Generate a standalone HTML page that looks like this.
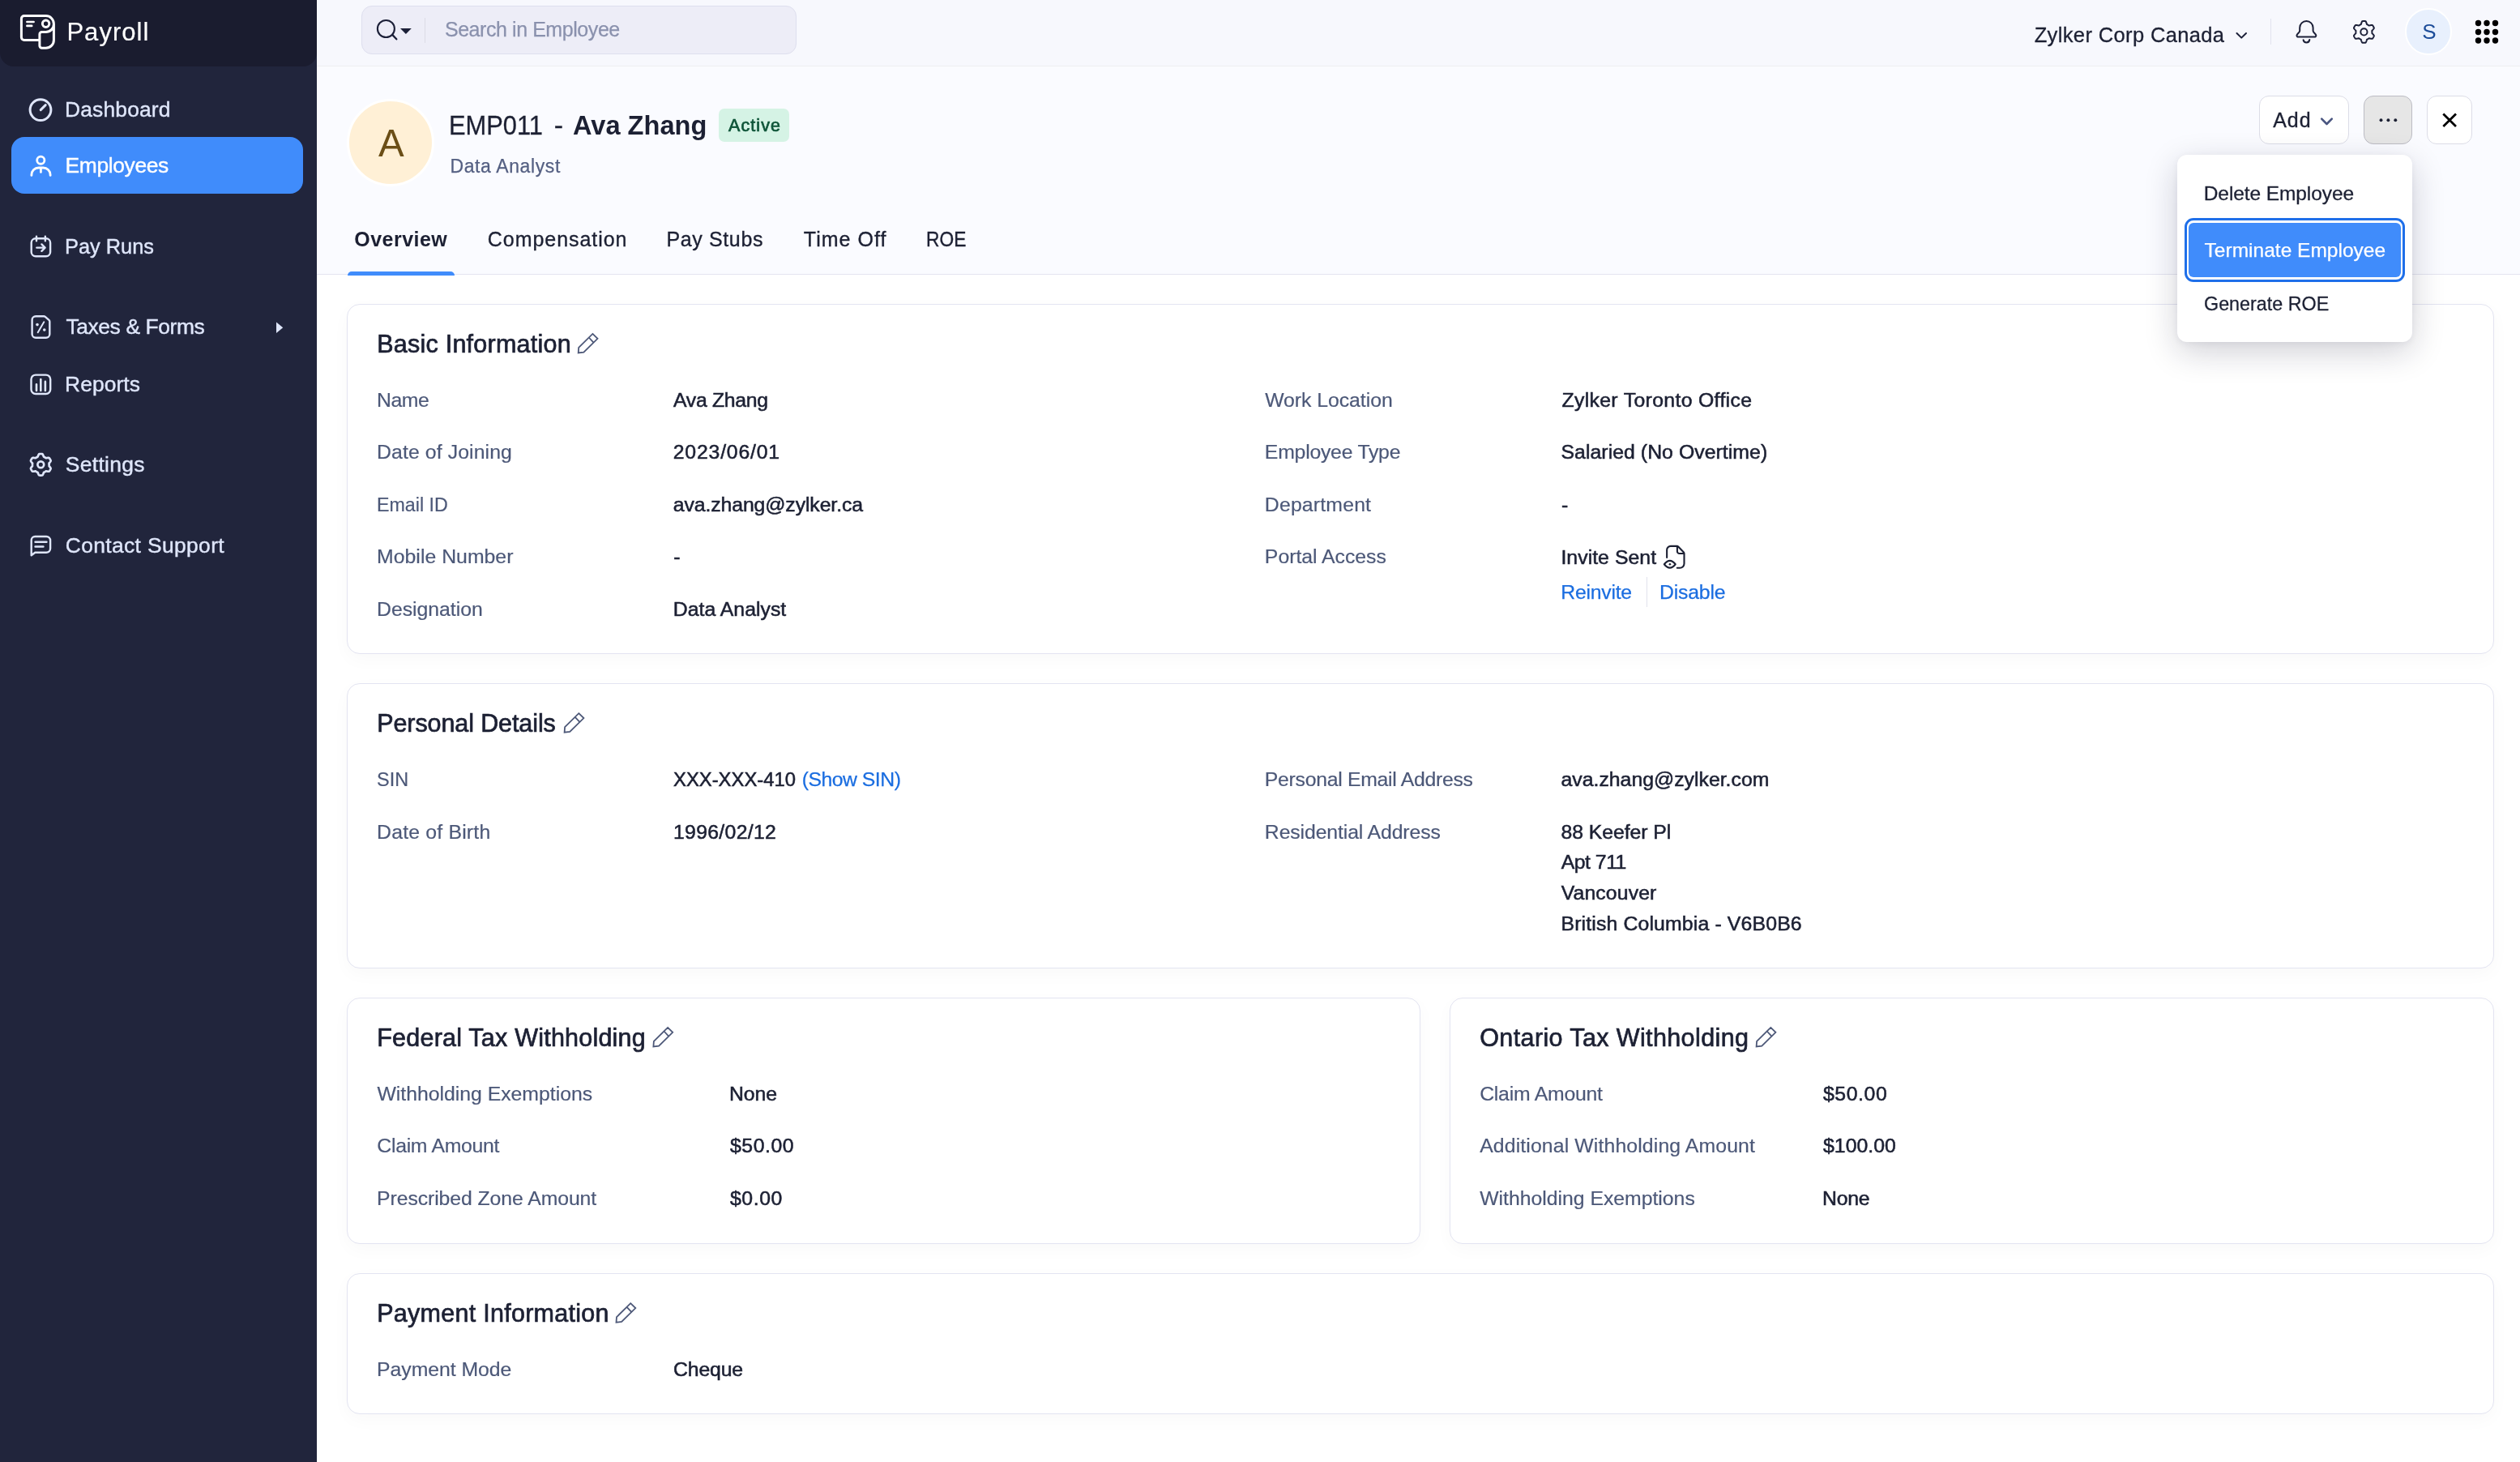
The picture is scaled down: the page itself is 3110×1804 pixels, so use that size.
<!DOCTYPE html>
<html lang="en"><head><meta charset="utf-8"><title>Payroll - Employee</title>
<style>
*{box-sizing:border-box;margin:0;padding:0}
html,body{width:3110px;height:1804px;overflow:hidden;background:#fff}
body{position:relative;font-family:"Liberation Sans",sans-serif;color:#1c2033}
.abs{position:absolute}
.ic{position:absolute;overflow:visible}
.t{position:absolute;white-space:nowrap;line-height:0;font-kerning:normal}
#side{left:0;top:0;width:391px;height:1804px;background:#21253c}
#sidehead{left:0;top:0;width:391px;height:82px;background:#1a1c2f;border-radius:0 0 17px 17px}
#navact{left:14px;top:169px;width:360px;height:70px;border-radius:16px;background:#408cfb}
#topbar{left:391px;top:0;width:2719px;height:82px;background:#f7f8fd;border-bottom:1px solid #eeeef1}
#search{left:446px;top:7px;width:537px;height:60px;border-radius:13px;background:#ededf7;border:1px solid #dedfee}
#sdiv{left:524px;top:22px;width:1.3px;height:31px;background:#dcdce6}
#tdiv{left:2802px;top:23px;width:1.3px;height:32px;background:#e2e3ee}
#uava{left:2968.3px;top:10.2px;width:57.4px;height:57.4px;border-radius:50%;background:#e8f0fd;border:2.7px solid #fff}
#head{left:391px;top:82px;width:2719px;height:257px;background:#fafbff;border-bottom:1.5px solid #e4e5f0}
#ava{left:428px;top:122px;width:108px;height:108px;border-radius:50%;background:#fff0d6;border:3px solid #fff}
#badge{left:887px;top:134px;width:87px;height:41px;border-radius:7px;background:#d5f3e5}
#tabline{left:429px;top:335px;width:132px;height:4.5px;background:#408cfb;border-radius:5px 5px 0 0}
.btn{position:absolute;top:118px;height:60px;border-radius:12px;background:#fff;border:1.5px solid #dcdde7}
#badd{left:2788px;width:111px}
#bdots{left:2917px;width:60px;background:#e6e6e6;border-color:#bcbcc4}
#bx{left:2995px;width:56px}
.card{position:absolute;background:#fff;border:1px solid #e3e4f1;border-radius:16px;box-shadow:0 7px 22px rgba(10,10,40,.028)}
#dd{left:2687px;top:191px;width:289.5px;height:231px;border-radius:12px;background:#fff;box-shadow:0 12px 40px rgba(20,20,50,.2),0 2px 8px rgba(20,20,50,.05)}
#ddring{left:2695.7px;top:269.3px;width:272.6px;height:78.3px;border-radius:11px;border:3px solid #1f6fe9;background:#fff}
#ddfill{left:2701.2px;top:274.8px;width:261.6px;height:67px;border-radius:6px;background:#408cfb}
#txt{position:absolute;left:0;top:0;width:3110px;height:1804px;will-change:transform}
#rdiv{left:2032px;top:712px;width:1.3px;height:37px;background:#e1e2ec}
</style></head>
<body>
<div id="side" class="abs"></div><div id="sidehead" class="abs"></div><div id="navact" class="abs"></div>
<svg class="ic" style="left:20px;top:12px" width="54" height="54" viewBox="20 12 54 54" ><path d="M48.9 49.4 H29.9 A3.5 3.5 0 0 1 26.4 45.9 V23.1 A3.5 3.5 0 0 1 29.9 19.6 H56.6 A9.8 9.8 0 0 1 66.4 29.4 V49.4 A9.8 9.8 0 0 1 56.6 59.2 H51.6 A2.7 2.7 0 0 1 48.9 56.5 V42.2 A2.7 2.7 0 0 1 51.6 39.5 H56.6 A9.8 9.8 0 0 0 66.4 29.7" stroke="#fff" stroke-width="3" fill="none" stroke-linecap="round" stroke-linejoin="round"/><circle cx="56.6" cy="29.3" r="4.2" stroke="#fff" stroke-width="3" fill="none" stroke-linecap="round" stroke-linejoin="round"/><path d="M33.4 27 H41.6 M33.4 31.9 H39.2" stroke="#fff" stroke-width="2.6" stroke-linecap="round" fill="none"/></svg><svg class="ic" style="left:30px;top:115px" width="40" height="40" viewBox="30 115 40 40" ><circle cx="50" cy="135.6" r="12.9" stroke="#dfe6fa" stroke-width="3" fill="none" stroke-linecap="round"/><path d="M50.2 135.6 L56.2 129.6" stroke="#dfe6fa" stroke-width="3" fill="none" stroke-linecap="round"/></svg><svg class="ic" style="left:30px;top:185px" width="40" height="40" viewBox="30 185 40 40" ><circle cx="50.3" cy="197.65" r="4.6" stroke="#fff" stroke-width="2.8" fill="none" stroke-linecap="round"/><path d="M38.9 216.4 V215.8 A8.8 8.8 0 0 1 47.7 207 H53.3 A8.8 8.8 0 0 1 62.1 215.8 V216.4 M50.4 207 V212.4" stroke="#fff" stroke-width="2.8" fill="none" stroke-linecap="round"/></svg><svg class="ic" style="left:30px;top:285px" width="40" height="40" viewBox="30 285 40 40" ><rect x="38.7" y="294.3" width="23.4" height="21.9" rx="5.3" stroke="#dfe6fa" stroke-width="2.4" fill="none" stroke-linecap="round" stroke-linejoin="round"/><path d="M45 291.6 V297.2 M55.85 291.6 V297.2 M45.3 305.6 H55.5 M51.4 301.4 L55.6 305.6 L51.4 309.8" stroke="#dfe6fa" stroke-width="2.4" fill="none" stroke-linecap="round" stroke-linejoin="round"/></svg><svg class="ic" style="left:30px;top:384px" width="40" height="40" viewBox="30 384 40 40" ><path d="M44.1 390.2 H54.0 Q55 390.2 55.8 390.9 L60.4 394.8 Q61.3 395.6 61.3 396.8 V412.2 A4.5 4.5 0 0 1 56.8 416.7 H44.1 A4.5 4.5 0 0 1 39.6 412.2 V394.7 A4.5 4.5 0 0 1 44.1 390.2 Z" stroke="#dfe6fa" stroke-width="2.4" fill="none" stroke-linecap="round" stroke-linejoin="round"/><path d="M46.7 410.2 L54.3 397.3" stroke="#dfe6fa" stroke-width="2" stroke-linecap="round"/><circle cx="46" cy="400.6" r="1.8" fill="#dfe6fa"/><circle cx="54.75" cy="407" r="1.8" fill="#dfe6fa"/></svg><svg class="ic" style="left:30px;top:455px" width="40" height="40" viewBox="30 455 40 40" ><rect x="38.5" y="462.6" width="23.7" height="23.4" rx="5.5" stroke="#dfe6fa" stroke-width="2.4" fill="none" stroke-linecap="round"/><path d="M45 474.2 V482 M50.3 468 V482 M55.85 470.9 V482" stroke="#dfe6fa" stroke-width="2.6" stroke-linecap="round"/></svg><svg class="ic" style="left:30px;top:553px" width="40" height="40" viewBox="30 553 40 40" ><path d="M60.60 573.30 L60.59 572.94 L60.57 572.58 L60.54 572.22 L60.50 571.87 L60.65 571.48 L61.06 571.01 L61.49 570.51 L61.90 569.97 L62.28 569.41 L62.60 568.82 L62.63 568.32 L62.45 567.89 L62.25 567.47 L62.04 567.06 L61.82 566.65 L61.58 566.25 L61.33 565.86 L61.06 565.48 L60.78 565.11 L60.33 564.88 L59.66 564.87 L58.98 564.92 L58.31 565.01 L57.66 565.12 L57.05 565.25 L56.64 565.18 L56.35 564.97 L56.06 564.76 L55.76 564.57 L55.45 564.38 L55.14 564.21 L54.82 564.04 L54.49 563.89 L54.16 563.75 L53.89 563.43 L53.70 562.84 L53.48 562.22 L53.22 561.59 L52.92 560.98 L52.57 560.41 L52.15 560.13 L51.69 560.07 L51.23 560.03 L50.76 560.01 L50.30 560.00 L49.84 560.01 L49.37 560.03 L48.91 560.07 L48.45 560.13 L48.03 560.41 L47.68 560.98 L47.38 561.59 L47.12 562.22 L46.90 562.84 L46.71 563.43 L46.44 563.75 L46.11 563.89 L45.78 564.04 L45.46 564.21 L45.15 564.38 L44.84 564.57 L44.54 564.76 L44.25 564.97 L43.96 565.18 L43.55 565.25 L42.94 565.12 L42.29 565.01 L41.62 564.92 L40.94 564.87 L40.27 564.88 L39.82 565.11 L39.54 565.48 L39.27 565.86 L39.02 566.25 L38.78 566.65 L38.56 567.06 L38.35 567.47 L38.15 567.89 L37.97 568.32 L38.00 568.82 L38.32 569.41 L38.70 569.97 L39.11 570.51 L39.54 571.01 L39.95 571.48 L40.10 571.87 L40.06 572.22 L40.03 572.58 L40.01 572.94 L40.00 573.30 L40.01 573.66 L40.03 574.02 L40.06 574.38 L40.10 574.73 L39.95 575.12 L39.54 575.59 L39.11 576.09 L38.70 576.63 L38.32 577.19 L38.00 577.78 L37.97 578.28 L38.15 578.71 L38.35 579.13 L38.56 579.54 L38.78 579.95 L39.02 580.35 L39.27 580.74 L39.54 581.12 L39.82 581.49 L40.27 581.72 L40.94 581.73 L41.62 581.68 L42.29 581.59 L42.94 581.48 L43.55 581.35 L43.96 581.42 L44.25 581.63 L44.54 581.84 L44.84 582.03 L45.15 582.22 L45.46 582.39 L45.78 582.56 L46.11 582.71 L46.44 582.85 L46.71 583.17 L46.90 583.76 L47.12 584.38 L47.38 585.01 L47.68 585.62 L48.03 586.19 L48.45 586.47 L48.91 586.53 L49.37 586.57 L49.84 586.59 L50.30 586.60 L50.76 586.59 L51.23 586.57 L51.69 586.53 L52.15 586.47 L52.57 586.19 L52.92 585.62 L53.22 585.01 L53.48 584.38 L53.70 583.76 L53.89 583.17 L54.16 582.85 L54.49 582.71 L54.82 582.56 L55.14 582.39 L55.45 582.22 L55.76 582.03 L56.06 581.84 L56.35 581.63 L56.64 581.42 L57.05 581.35 L57.66 581.48 L58.31 581.59 L58.98 581.68 L59.66 581.73 L60.33 581.72 L60.78 581.49 L61.06 581.12 L61.33 580.74 L61.58 580.35 L61.82 579.95 L62.04 579.54 L62.25 579.13 L62.45 578.71 L62.63 578.28 L62.60 577.78 L62.28 577.19 L61.90 576.63 L61.49 576.09 L61.06 575.59 L60.65 575.12 L60.50 574.73 L60.54 574.38 L60.57 574.02 L60.59 573.66Z" stroke="#dfe6fa" stroke-width="2.7" fill="none" stroke-linejoin="round"/><circle cx="50.3" cy="573.3" r="3.9" stroke="#dfe6fa" stroke-width="2.7" fill="none" stroke-linejoin="round"/></svg><svg class="ic" style="left:30px;top:655px" width="40" height="40" viewBox="30 655 40 40" ><path d="M38.7 685.3 V666.6 A4.6 4.6 0 0 1 43.3 662 H57.1 A5 5 0 0 1 62.1 667 V676.8 A5 5 0 0 1 57.1 681.8 H43.3 Z" stroke="#dfe6fa" stroke-width="2.4" fill="none" stroke-linecap="round" stroke-linejoin="round"/><path d="M43.6 668.7 H57.4 M43.6 674.5 H53.4" stroke="#dfe6fa" stroke-width="2.6" stroke-linecap="round"/></svg><svg class="ic" style="left:338px;top:394px" width="16" height="20" viewBox="338 394 16 20" ><path d="M341 397.4 L349.2 404.2 L341 411 Z" fill="#dfe6fa"/></svg>
<div id="topbar" class="abs"></div><div id="search" class="abs"></div><div id="sdiv" class="abs"></div><div id="tdiv" class="abs"></div><div id="uava" class="abs"></div>
<svg class="ic" style="left:460px;top:20px" width="52" height="32" viewBox="460 20 52 32" ><circle cx="476.4" cy="35.5" r="10.5" stroke="#1c2038" stroke-width="2.1" fill="none"/><path d="M484.2 42.9 L489.3 48.3" stroke="#1c2038" stroke-width="2.3" stroke-linecap="round"/><path d="M494 35.1 H507.8 L500.9 42.1 Z" fill="#1c2038"/></svg><svg class="ic" style="left:2756px;top:37px" width="21" height="15" viewBox="2756 37 21 15" ><path d="M2760.5 41 L2766.25 46.6 L2772 41" stroke="#1c2038" stroke-width="2" fill="none" stroke-linecap="round" stroke-linejoin="round"/></svg><svg class="ic" style="left:2828px;top:20px" width="38" height="38" viewBox="2828 20 38 38" ><path d="M2838.2000000000003 38 V34.2 A8.2 8.2 0 0 1 2854.6 34.2 V38 C2854.6 40 2858.0 41.6 2858.3 43.5 C2858.5 44.8 2857.7000000000003 45.6 2856.4 45.6 H2836.4 C2835.1 45.6 2834.3 44.8 2834.5 43.5 C2834.8 41.6 2838.2000000000003 40 2838.2000000000003 38 Z" stroke="#1c2038" stroke-width="2" fill="none" stroke-linecap="round" stroke-linejoin="round"/><path d="M2842.6 49.2 A3.9 3.9 0 0 0 2850.3 49" stroke="#1c2038" stroke-width="2" fill="none" stroke-linecap="round" stroke-linejoin="round"/></svg><svg class="ic" style="left:2898px;top:20px" width="40" height="40" viewBox="2898 20 40 40" ><path d="M2927.40 39.40 L2927.39 39.05 L2927.38 38.70 L2927.35 38.35 L2927.30 38.01 L2927.48 37.62 L2927.96 37.16 L2928.46 36.64 L2928.94 36.09 L2929.39 35.50 L2929.77 34.90 L2929.82 34.38 L2929.64 33.95 L2929.44 33.53 L2929.23 33.11 L2929.00 32.70 L2928.76 32.30 L2928.51 31.91 L2928.24 31.52 L2927.96 31.15 L2927.49 30.94 L2926.77 30.97 L2926.04 31.06 L2925.31 31.20 L2924.62 31.38 L2923.98 31.56 L2923.56 31.52 L2923.28 31.31 L2922.99 31.11 L2922.70 30.92 L2922.40 30.74 L2922.09 30.57 L2921.78 30.41 L2921.47 30.26 L2921.15 30.13 L2920.90 29.78 L2920.74 29.13 L2920.54 28.45 L2920.30 27.75 L2920.02 27.07 L2919.69 26.43 L2919.26 26.13 L2918.80 26.07 L2918.33 26.03 L2917.87 26.01 L2917.40 26.00 L2916.93 26.01 L2916.47 26.03 L2916.00 26.07 L2915.54 26.13 L2915.11 26.43 L2914.78 27.07 L2914.50 27.75 L2914.26 28.45 L2914.06 29.13 L2913.90 29.78 L2913.65 30.13 L2913.33 30.26 L2913.02 30.41 L2912.71 30.57 L2912.40 30.74 L2912.10 30.92 L2911.81 31.11 L2911.52 31.31 L2911.24 31.52 L2910.82 31.56 L2910.18 31.38 L2909.49 31.20 L2908.76 31.06 L2908.03 30.97 L2907.31 30.94 L2906.84 31.15 L2906.56 31.52 L2906.29 31.91 L2906.04 32.30 L2905.80 32.70 L2905.57 33.11 L2905.36 33.53 L2905.16 33.95 L2904.98 34.38 L2905.03 34.90 L2905.41 35.50 L2905.86 36.09 L2906.34 36.64 L2906.84 37.16 L2907.32 37.62 L2907.50 38.01 L2907.45 38.35 L2907.42 38.70 L2907.41 39.05 L2907.40 39.40 L2907.41 39.75 L2907.42 40.10 L2907.45 40.45 L2907.50 40.79 L2907.32 41.18 L2906.84 41.64 L2906.34 42.16 L2905.86 42.71 L2905.41 43.30 L2905.03 43.90 L2904.98 44.42 L2905.16 44.85 L2905.36 45.27 L2905.57 45.69 L2905.80 46.10 L2906.04 46.50 L2906.29 46.89 L2906.56 47.28 L2906.84 47.65 L2907.31 47.86 L2908.03 47.83 L2908.76 47.74 L2909.49 47.60 L2910.18 47.42 L2910.82 47.24 L2911.24 47.28 L2911.52 47.49 L2911.81 47.69 L2912.10 47.88 L2912.40 48.06 L2912.71 48.23 L2913.02 48.39 L2913.33 48.54 L2913.65 48.67 L2913.90 49.02 L2914.06 49.67 L2914.26 50.35 L2914.50 51.05 L2914.78 51.73 L2915.11 52.37 L2915.54 52.67 L2916.00 52.73 L2916.47 52.77 L2916.93 52.79 L2917.40 52.80 L2917.87 52.79 L2918.33 52.77 L2918.80 52.73 L2919.26 52.67 L2919.69 52.37 L2920.02 51.73 L2920.30 51.05 L2920.54 50.35 L2920.74 49.67 L2920.90 49.02 L2921.15 48.67 L2921.47 48.54 L2921.78 48.39 L2922.09 48.23 L2922.40 48.06 L2922.70 47.88 L2922.99 47.69 L2923.28 47.49 L2923.56 47.28 L2923.98 47.24 L2924.62 47.42 L2925.31 47.60 L2926.04 47.74 L2926.77 47.83 L2927.49 47.86 L2927.96 47.65 L2928.24 47.28 L2928.51 46.89 L2928.76 46.50 L2929.00 46.10 L2929.23 45.69 L2929.44 45.27 L2929.64 44.85 L2929.82 44.42 L2929.77 43.90 L2929.39 43.30 L2928.94 42.71 L2928.46 42.16 L2927.96 41.64 L2927.48 41.18 L2927.30 40.79 L2927.35 40.45 L2927.38 40.10 L2927.39 39.75Z" stroke="#1c2038" stroke-width="2" fill="none" stroke-linejoin="round"/><circle cx="2917.4" cy="39.4" r="4.1" stroke="#1c2038" stroke-width="2" fill="none" stroke-linejoin="round"/></svg><svg class="ic" style="left:3050px;top:20px" width="40" height="40" viewBox="3050 20 40 40" ><circle cx="3058.5" cy="28.5" r="3.7" fill="#000"/><circle cx="3069.0" cy="28.5" r="3.7" fill="#000"/><circle cx="3079.5" cy="28.5" r="3.7" fill="#000"/><circle cx="3058.5" cy="39.5" r="3.7" fill="#000"/><circle cx="3069.0" cy="39.5" r="3.7" fill="#000"/><circle cx="3079.5" cy="39.5" r="3.7" fill="#000"/><circle cx="3058.5" cy="50.0" r="3.7" fill="#000"/><circle cx="3069.0" cy="50.0" r="3.7" fill="#000"/><circle cx="3079.5" cy="50.0" r="3.7" fill="#000"/></svg>
<div id="head" class="abs"></div><div id="ava" class="abs"></div><div id="badge" class="abs"></div><div id="tabline" class="abs"></div>
<div id="badd" class="btn"></div><div id="bdots" class="btn"></div><div id="bx" class="btn"></div>
<svg class="ic" style="left:2861px;top:142px" width="22" height="16" viewBox="2861 142 22 16" ><path d="M2865.2 146.6 L2871.5 153 L2877.8 146.6" stroke="#4a5680" stroke-width="2.6" fill="none" stroke-linecap="round" stroke-linejoin="round"/></svg><svg class="ic" style="left:2930px;top:140px" width="36" height="16" viewBox="2930 140 36 16" ><circle cx="2938.5" cy="148.2" r="1.95" fill="#1c2033"/><circle cx="2947.4" cy="148.2" r="1.95" fill="#1c2033"/><circle cx="2956.3" cy="148.2" r="1.95" fill="#1c2033"/></svg><svg class="ic" style="left:3008px;top:134px" width="30" height="30" viewBox="3008 134 30 30" ><path d="M3015.3 140.4 L3031 155.9 M3031 140.4 L3015.3 155.9" stroke="#000" stroke-width="2.8" stroke-linecap="butt"/></svg>
<div class="card" style="left:428px;top:375px;width:2650px;height:432px"></div>
<div class="card" style="left:428px;top:843px;width:2650px;height:352px"></div>
<div class="card" style="left:428px;top:1231px;width:1325px;height:304px"></div>
<div class="card" style="left:1789px;top:1231px;width:1289px;height:304px"></div>
<div class="card" style="left:428px;top:1571px;width:2650px;height:174px"></div>
<svg class="ic" style="left:710px;top:408px" width="34" height="34" viewBox="710 408 34 34" ><path d="M731.40 411.90 L737.50 417.80 L720.40 434.70 L713.70 435.40 L714.20 428.80Z M726.80 416.50 L732.50 422.60" stroke="#4d5878" stroke-width="1.8" fill="none" stroke-linejoin="miter"/></svg>
<svg class="ic" style="left:693px;top:876px" width="34" height="34" viewBox="693 876 34 34" ><path d="M714.30 880.20 L720.40 886.10 L703.30 903.00 L696.60 903.70 L697.10 897.10Z M709.70 884.80 L715.40 890.90" stroke="#4d5878" stroke-width="1.8" fill="none" stroke-linejoin="miter"/></svg>
<svg class="ic" style="left:803px;top:1264px" width="34" height="34" viewBox="803 1264 34 34" ><path d="M824.10 1267.90 L830.20 1273.80 L813.10 1290.70 L806.40 1291.40 L806.90 1284.80Z M819.50 1272.50 L825.20 1278.60" stroke="#4d5878" stroke-width="1.8" fill="none" stroke-linejoin="miter"/></svg>
<svg class="ic" style="left:2164px;top:1264px" width="34" height="34" viewBox="2164 1264 34 34" ><path d="M2185.30 1267.90 L2191.40 1273.80 L2174.30 1290.70 L2167.60 1291.40 L2168.10 1284.80Z M2180.70 1272.50 L2186.40 1278.60" stroke="#4d5878" stroke-width="1.8" fill="none" stroke-linejoin="miter"/></svg>
<svg class="ic" style="left:757px;top:1604px" width="34" height="34" viewBox="757 1604 34 34" ><path d="M778.20 1608.20 L784.30 1614.10 L767.20 1631.00 L760.50 1631.70 L761.00 1625.10Z M773.60 1612.80 L779.30 1618.90" stroke="#4d5878" stroke-width="1.8" fill="none" stroke-linejoin="miter"/></svg>
<svg class="ic" style="left:2048px;top:668px" width="36" height="38" viewBox="2048 668 36 38" ><path d="M2057.15 687.9 V678.6 A4.7 4.7 0 0 1 2061.85 673.9 H2069.5 Q2070.6 673.9 2071.4 674.7 L2077.7 681.3 Q2078.5 682.2 2078.5 683.3 V695.5 A5.2 5.2 0 0 1 2073.3 700.7 H2069.8" stroke="#1c2033" stroke-width="2.1" fill="none" stroke-linecap="round" stroke-linejoin="round"/><path d="M2069.9 674.2 V680.2 A2.8 2.8 0 0 0 2072.7 683 H2078.2" stroke="#1c2033" stroke-width="2.1" fill="none" stroke-linecap="round" stroke-linejoin="round"/><path d="M2053.85 696.25 Q2057.3 691.9 2060.8 691.9 Q2064.3 691.9 2067.7 696.25 Q2064.3 700.6 2060.8 700.6 Q2057.3 700.6 2053.85 696.25 Z" stroke="#1c2033" stroke-width="2.1" fill="none" stroke-linecap="round" stroke-linejoin="round"/><circle cx="2060.9" cy="696.25" r="1.3" fill="#1c2033"/></svg><div id="rdiv" class="abs"></div>
<div id="dd" class="abs"></div><div id="ddring" class="abs"></div><div id="ddfill" class="abs"></div>
<div id="txt">
<span class="t" style="left:82.40px;top:39.60px;font-size:31px;color:#ffffff;letter-spacing:1.039px;-webkit-text-stroke:0.2px #ffffff">Payroll</span>
<span class="t" style="left:80.00px;top:135.10px;font-size:26.4px;color:#dfe6fa;letter-spacing:0.171px;-webkit-text-stroke:0.4px #dfe6fa">Dashboard</span>
<span class="t" style="left:80.50px;top:204.10px;font-size:26.4px;color:#ffffff;letter-spacing:-0.344px;-webkit-text-stroke:0.4px #ffffff">Employees</span>
<span class="t" style="left:80.07px;top:304.10px;font-size:26.4px;color:#dfe6fa;-webkit-text-stroke:0.4px #dfe6fa;transform:scaleX(0.9608);transform-origin:0 0">Pay Runs</span>
<span class="t" style="left:81.40px;top:403.10px;font-size:26.4px;color:#dfe6fa;letter-spacing:-0.381px;-webkit-text-stroke:0.4px #dfe6fa">Taxes &amp; Forms</span>
<span class="t" style="left:80.00px;top:474.10px;font-size:26.4px;color:#dfe6fa;letter-spacing:0.098px;-webkit-text-stroke:0.4px #dfe6fa">Reports</span>
<span class="t" style="left:80.80px;top:573.10px;font-size:26.4px;color:#dfe6fa;letter-spacing:0.334px;-webkit-text-stroke:0.4px #dfe6fa">Settings</span>
<span class="t" style="left:80.80px;top:673.10px;font-size:26.4px;color:#dfe6fa;letter-spacing:0.366px;-webkit-text-stroke:0.4px #dfe6fa">Contact Support</span>
<span class="t" style="left:548.92px;top:36.10px;font-size:25px;color:#8a91ad;letter-spacing:-0.434px;-webkit-text-stroke:0.25px #8a91ad">Search in Employee</span>
<span class="t" style="left:2510.65px;top:43.10px;font-size:25.5px;color:#1c2033;letter-spacing:0.365px;-webkit-text-stroke:0.3px #1c2033">Zylker Corp Canada</span>
<span class="t" style="left:2989.30px;top:39.10px;font-size:26px;color:#1c4c99">S</span>
<span class="t" style="left:467.00px;top:176.60px;font-size:47.5px;color:#6b4e16">A</span>
<span class="t" style="left:554.32px;top:154.10px;font-size:34px;color:#1c2033;-webkit-text-stroke:0.3px #1c2033;transform:scaleX(0.9060);transform-origin:0 0">EMP011</span>
<span class="t" style="left:683.85px;top:154.10px;font-size:34px;color:#1c2033;-webkit-text-stroke:0.3px #1c2033">-</span>
<span class="t" style="left:707.20px;top:154.10px;font-size:34px;color:#1c2033;font-weight:700;transform:scaleX(0.9580);transform-origin:0 0">Ava Zhang</span>
<span class="t" style="left:899.05px;top:155.10px;font-size:21.5px;color:#0f5539;letter-spacing:1.062px;-webkit-text-stroke:0.7px #0f5539">Active</span>
<span class="t" style="left:555.42px;top:205.10px;font-size:23px;color:#545f82;letter-spacing:0.622px;-webkit-text-stroke:0.25px #545f82">Data Analyst</span>
<span class="t" style="left:437.30px;top:295.10px;font-size:25px;color:#1c2033;font-weight:700;letter-spacing:0.466px">Overview</span>
<span class="t" style="left:601.77px;top:295.10px;font-size:25px;color:#1c2033;letter-spacing:0.959px;-webkit-text-stroke:0.35px #1c2033">Compensation</span>
<span class="t" style="left:822.47px;top:295.10px;font-size:25px;color:#1c2033;letter-spacing:0.625px;-webkit-text-stroke:0.35px #1c2033">Pay Stubs</span>
<span class="t" style="left:991.77px;top:295.10px;font-size:25px;color:#1c2033;letter-spacing:1.020px;-webkit-text-stroke:0.35px #1c2033">Time Off</span>
<span class="t" style="left:1142.84px;top:295.10px;font-size:25px;color:#1c2033;-webkit-text-stroke:0.35px #1c2033;transform:scaleX(0.9103);transform-origin:0 0">ROE</span>
<span class="t" style="left:2805.25px;top:148.10px;font-size:25px;color:#1c2033;letter-spacing:0.911px;-webkit-text-stroke:0.3px #1c2033">Add</span>
<span class="t" style="left:2719.75px;top:238.60px;font-size:24.5px;color:#1c2033;letter-spacing:-0.089px;-webkit-text-stroke:0.3px #1c2033">Delete Employee</span>
<span class="t" style="left:2720.62px;top:308.60px;font-size:24.5px;color:#ffffff;letter-spacing:0.009px;-webkit-text-stroke:0.25px #ffffff">Terminate Employee</span>
<span class="t" style="left:2720.19px;top:374.60px;font-size:24.5px;color:#1c2033;-webkit-text-stroke:0.3px #1c2033;transform:scaleX(0.9515);transform-origin:0 0">Generate ROE</span>
<span class="t" style="left:465.27px;top:424.10px;font-size:30.5px;color:#1c2033;letter-spacing:0.232px;-webkit-text-stroke:0.7px #1c2033">Basic Information</span>
<span class="t" style="left:465.06px;top:493.60px;font-size:24.8px;color:#4c5878;letter-spacing:-0.505px;-webkit-text-stroke:0.2px #4c5878">Name</span>
<span class="t" style="left:831.05px;top:493.60px;font-size:24.8px;color:#1c2033;letter-spacing:-0.302px;-webkit-text-stroke:0.55px #1c2033">Ava Zhang</span>
<span class="t" style="left:465.06px;top:557.60px;font-size:24.8px;color:#4c5878;letter-spacing:0.101px;-webkit-text-stroke:0.2px #4c5878">Date of Joining</span>
<span class="t" style="left:830.77px;top:557.60px;font-size:24.8px;color:#1c2033;letter-spacing:0.804px;-webkit-text-stroke:0.55px #1c2033">2023/06/01</span>
<span class="t" style="left:465.18px;top:622.60px;font-size:24.8px;color:#4c5878;-webkit-text-stroke:0.2px #4c5878;transform:scaleX(0.9369);transform-origin:0 0">Email ID</span>
<span class="t" style="left:830.77px;top:622.60px;font-size:24.8px;color:#1c2033;letter-spacing:-0.101px;-webkit-text-stroke:0.55px #1c2033">ava.zhang@zylker.ca</span>
<span class="t" style="left:465.06px;top:686.60px;font-size:24.8px;color:#4c5878;letter-spacing:0.022px;-webkit-text-stroke:0.2px #4c5878">Mobile Number</span>
<span class="t" style="left:831.25px;top:686.60px;font-size:24.8px;color:#1c2033;-webkit-text-stroke:0.55px #1c2033">-</span>
<span class="t" style="left:465.06px;top:751.60px;font-size:24.8px;color:#4c5878;letter-spacing:-0.033px;-webkit-text-stroke:0.2px #4c5878">Designation</span>
<span class="t" style="left:830.73px;top:751.60px;font-size:24.8px;color:#1c2033;letter-spacing:0.027px;-webkit-text-stroke:0.55px #1c2033">Data Analyst</span>
<span class="t" style="left:1561.18px;top:493.60px;font-size:24.8px;color:#4c5878;letter-spacing:-0.044px;-webkit-text-stroke:0.2px #4c5878">Work Location</span>
<span class="t" style="left:1927.48px;top:493.60px;font-size:24.8px;color:#1c2033;letter-spacing:0.332px;-webkit-text-stroke:0.55px #1c2033">Zylker Toronto Office</span>
<span class="t" style="left:1560.86px;top:557.60px;font-size:24.8px;color:#4c5878;letter-spacing:-0.240px;-webkit-text-stroke:0.2px #4c5878">Employee Type</span>
<span class="t" style="left:1926.48px;top:557.60px;font-size:24.8px;color:#1c2033;letter-spacing:0.055px;-webkit-text-stroke:0.55px #1c2033">Salaried (No Overtime)</span>
<span class="t" style="left:1560.86px;top:622.60px;font-size:24.8px;color:#4c5878;letter-spacing:0.175px;-webkit-text-stroke:0.2px #4c5878">Department</span>
<span class="t" style="left:1926.96px;top:622.60px;font-size:24.8px;color:#1c2033;-webkit-text-stroke:0.55px #1c2033">-</span>
<span class="t" style="left:1560.86px;top:686.60px;font-size:24.8px;color:#4c5878;letter-spacing:-0.021px;-webkit-text-stroke:0.2px #4c5878">Portal Access</span>
<span class="t" style="left:1926.44px;top:687.60px;font-size:24.8px;color:#1c2033;letter-spacing:0.041px;-webkit-text-stroke:0.55px #1c2033">Invite Sent</span>
<span class="t" style="left:1926.29px;top:730.60px;font-size:24.8px;color:#1a6de0;letter-spacing:-0.258px;-webkit-text-stroke:0.25px #1a6de0">Reinvite</span>
<span class="t" style="left:2048.09px;top:730.60px;font-size:24.8px;color:#1a6de0;letter-spacing:-0.203px;-webkit-text-stroke:0.25px #1a6de0">Disable</span>
<span class="t" style="left:465.27px;top:892.10px;font-size:30.5px;color:#1c2033;letter-spacing:-0.103px;-webkit-text-stroke:0.7px #1c2033">Personal Details</span>
<span class="t" style="left:465.15px;top:961.60px;font-size:24.8px;color:#4c5878;-webkit-text-stroke:0.2px #4c5878;transform:scaleX(0.9449);transform-origin:0 0">SIN</span>
<span class="t" style="left:831.04px;top:961.60px;font-size:24.8px;color:#1c2033;-webkit-text-stroke:0.55px #1c2033;transform:scaleX(0.9607);transform-origin:0 0">XXX-XXX-410</span>
<span class="t" style="left:989.64px;top:961.60px;font-size:24.8px;color:#1a6de0;letter-spacing:-0.498px;-webkit-text-stroke:0.25px #1a6de0">(Show SIN)</span>
<span class="t" style="left:465.06px;top:1026.60px;font-size:24.8px;color:#4c5878;letter-spacing:0.192px;-webkit-text-stroke:0.2px #4c5878">Date of Birth</span>
<span class="t" style="left:831.01px;top:1026.60px;font-size:24.8px;color:#1c2033;letter-spacing:0.299px;-webkit-text-stroke:0.55px #1c2033">1996/02/12</span>
<span class="t" style="left:1560.86px;top:961.60px;font-size:24.8px;color:#4c5878;letter-spacing:-0.294px;-webkit-text-stroke:0.2px #4c5878">Personal Email Address</span>
<span class="t" style="left:1926.48px;top:961.60px;font-size:24.8px;color:#1c2033;letter-spacing:0.010px;-webkit-text-stroke:0.55px #1c2033">ava.zhang@zylker.com</span>
<span class="t" style="left:1560.86px;top:1026.60px;font-size:24.8px;color:#4c5878;letter-spacing:-0.122px;-webkit-text-stroke:0.2px #4c5878">Residential Address</span>
<span class="t" style="left:1926.60px;top:1026.60px;font-size:24.8px;color:#1c2033;letter-spacing:-0.066px;-webkit-text-stroke:0.55px #1c2033">88 Keefer Pl</span>
<span class="t" style="left:1926.76px;top:1063.60px;font-size:24.8px;color:#1c2033;letter-spacing:-0.497px;-webkit-text-stroke:0.55px #1c2033">Apt 711</span>
<span class="t" style="left:1926.76px;top:1101.60px;font-size:24.8px;color:#1c2033;letter-spacing:0.103px;-webkit-text-stroke:0.55px #1c2033">Vancouver</span>
<span class="t" style="left:1926.44px;top:1139.60px;font-size:24.8px;color:#1c2033;letter-spacing:0.151px;-webkit-text-stroke:0.55px #1c2033">British Columbia - V6B0B6</span>
<span class="t" style="left:465.27px;top:1280.10px;font-size:30.5px;color:#1c2033;letter-spacing:0.221px;-webkit-text-stroke:0.7px #1c2033">Federal Tax Withholding</span>
<span class="t" style="left:465.38px;top:1349.60px;font-size:24.8px;color:#4c5878;letter-spacing:-0.014px;-webkit-text-stroke:0.2px #4c5878">Withholding Exemptions</span>
<span class="t" style="left:899.93px;top:1349.60px;font-size:24.8px;color:#1c2033;letter-spacing:-0.066px;-webkit-text-stroke:0.55px #1c2033">None</span>
<span class="t" style="left:465.34px;top:1413.60px;font-size:24.8px;color:#4c5878;letter-spacing:-0.297px;-webkit-text-stroke:0.2px #4c5878">Claim Amount</span>
<span class="t" style="left:900.98px;top:1413.60px;font-size:24.8px;color:#1c2033;letter-spacing:0.539px;-webkit-text-stroke:0.55px #1c2033">$50.00</span>
<span class="t" style="left:465.06px;top:1478.60px;font-size:24.8px;color:#4c5878;letter-spacing:-0.083px;-webkit-text-stroke:0.2px #4c5878">Prescribed Zone Amount</span>
<span class="t" style="left:900.98px;top:1478.60px;font-size:24.8px;color:#1c2033;letter-spacing:0.597px;-webkit-text-stroke:0.55px #1c2033">$0.00</span>
<span class="t" style="left:1826.23px;top:1280.10px;font-size:30.5px;color:#1c2033;letter-spacing:0.386px;-webkit-text-stroke:0.7px #1c2033">Ontario Tax Withholding</span>
<span class="t" style="left:1826.14px;top:1349.60px;font-size:24.8px;color:#4c5878;letter-spacing:-0.225px;-webkit-text-stroke:0.2px #4c5878">Claim Amount</span>
<span class="t" style="left:2249.97px;top:1349.60px;font-size:24.8px;color:#1c2033;letter-spacing:0.579px;-webkit-text-stroke:0.55px #1c2033">$50.00</span>
<span class="t" style="left:1826.18px;top:1413.60px;font-size:24.8px;color:#4c5878;letter-spacing:0.121px;-webkit-text-stroke:0.2px #4c5878">Additional Withholding Amount</span>
<span class="t" style="left:2249.97px;top:1413.60px;font-size:24.8px;color:#1c2033;letter-spacing:0.051px;-webkit-text-stroke:0.55px #1c2033">$100.00</span>
<span class="t" style="left:1826.18px;top:1478.60px;font-size:24.8px;color:#4c5878;letter-spacing:-0.019px;-webkit-text-stroke:0.2px #4c5878">Withholding Exemptions</span>
<span class="t" style="left:2248.93px;top:1478.60px;font-size:24.8px;color:#1c2033;letter-spacing:-0.200px;-webkit-text-stroke:0.55px #1c2033">None</span>
<span class="t" style="left:465.27px;top:1620.10px;font-size:30.5px;color:#1c2033;letter-spacing:0.263px;-webkit-text-stroke:0.7px #1c2033">Payment Information</span>
<span class="t" style="left:465.06px;top:1689.60px;font-size:24.8px;color:#4c5878;letter-spacing:-0.040px;-webkit-text-stroke:0.2px #4c5878">Payment Mode</span>
<span class="t" style="left:831.01px;top:1689.60px;font-size:24.8px;color:#1c2033;letter-spacing:-0.152px;-webkit-text-stroke:0.55px #1c2033">Cheque</span>
</div>
<script>(function(){var w=window.innerWidth;if(w&&Math.abs(w-3110)>2){var b=document.body;b.style.transformOrigin="0 0";b.style.transform="scale("+(w/3110)+")";}})();</script>
</body></html>
